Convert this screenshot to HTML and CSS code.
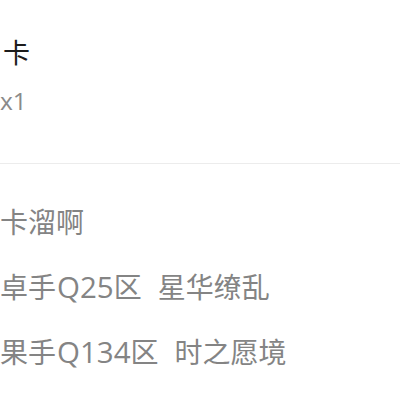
FILE: index.html
```html
<!DOCTYPE html>
<html lang="zh">
<head>
<meta charset="utf-8">
<link rel="stylesheet" href="styles.css">
</head>
<body>
<div class="page">
  <section class="header">
    <div class="title">卡</div>
    <div class="count">x1</div>
  </section>
  <ul class="list">
    <li class="row">卡溜啊</li>
    <li class="row">卓手<span class="latin">Q25</span>区<span class="gap"> </span>星华缭乱</li>
    <li class="row">果手<span class="latin">Q134</span>区<span class="gap"> </span>时之愿境</li>
  </ul>
</div>
</body>
</html>
```

FILE: styles.css
```css
html, body {
  margin: 0;
  padding: 0;
  background: #ffffff;
}
.page {
  width: 400px;
  height: 400px;
  overflow: hidden;
  font-family: "Noto Sans CJK SC", "Noto Sans", sans-serif;
}
.header {
  padding: 32px 0 0 3px;
  border-bottom: 1px solid #ececec;
  box-sizing: border-box;
  height: 164px;
}
.title {
  font-size: 27px;
  line-height: 40px;
  color: #1c1c1c;
}
.count {
  margin-top: 14px;
  margin-left: -3px;
  font-family: "Open Sans", "Noto Sans", sans-serif;
  font-size: 24.5px;
  line-height: 30px;
  color: #8a8a8a;
}
.list {
  list-style: none;
  margin: 0;
  padding: 25px 0 0 0;
}
.row {
  font-size: 28px;
  line-height: 65px;
  height: 65px;
  color: #848484;
  white-space: nowrap;
}
.latin {
  font-family: "Open Sans", "Noto Sans", sans-serif;
  font-size: 29.5px;
  margin-left: 1px;
}
.gap {
  display: inline-block;
  width: 16px;
}
```
